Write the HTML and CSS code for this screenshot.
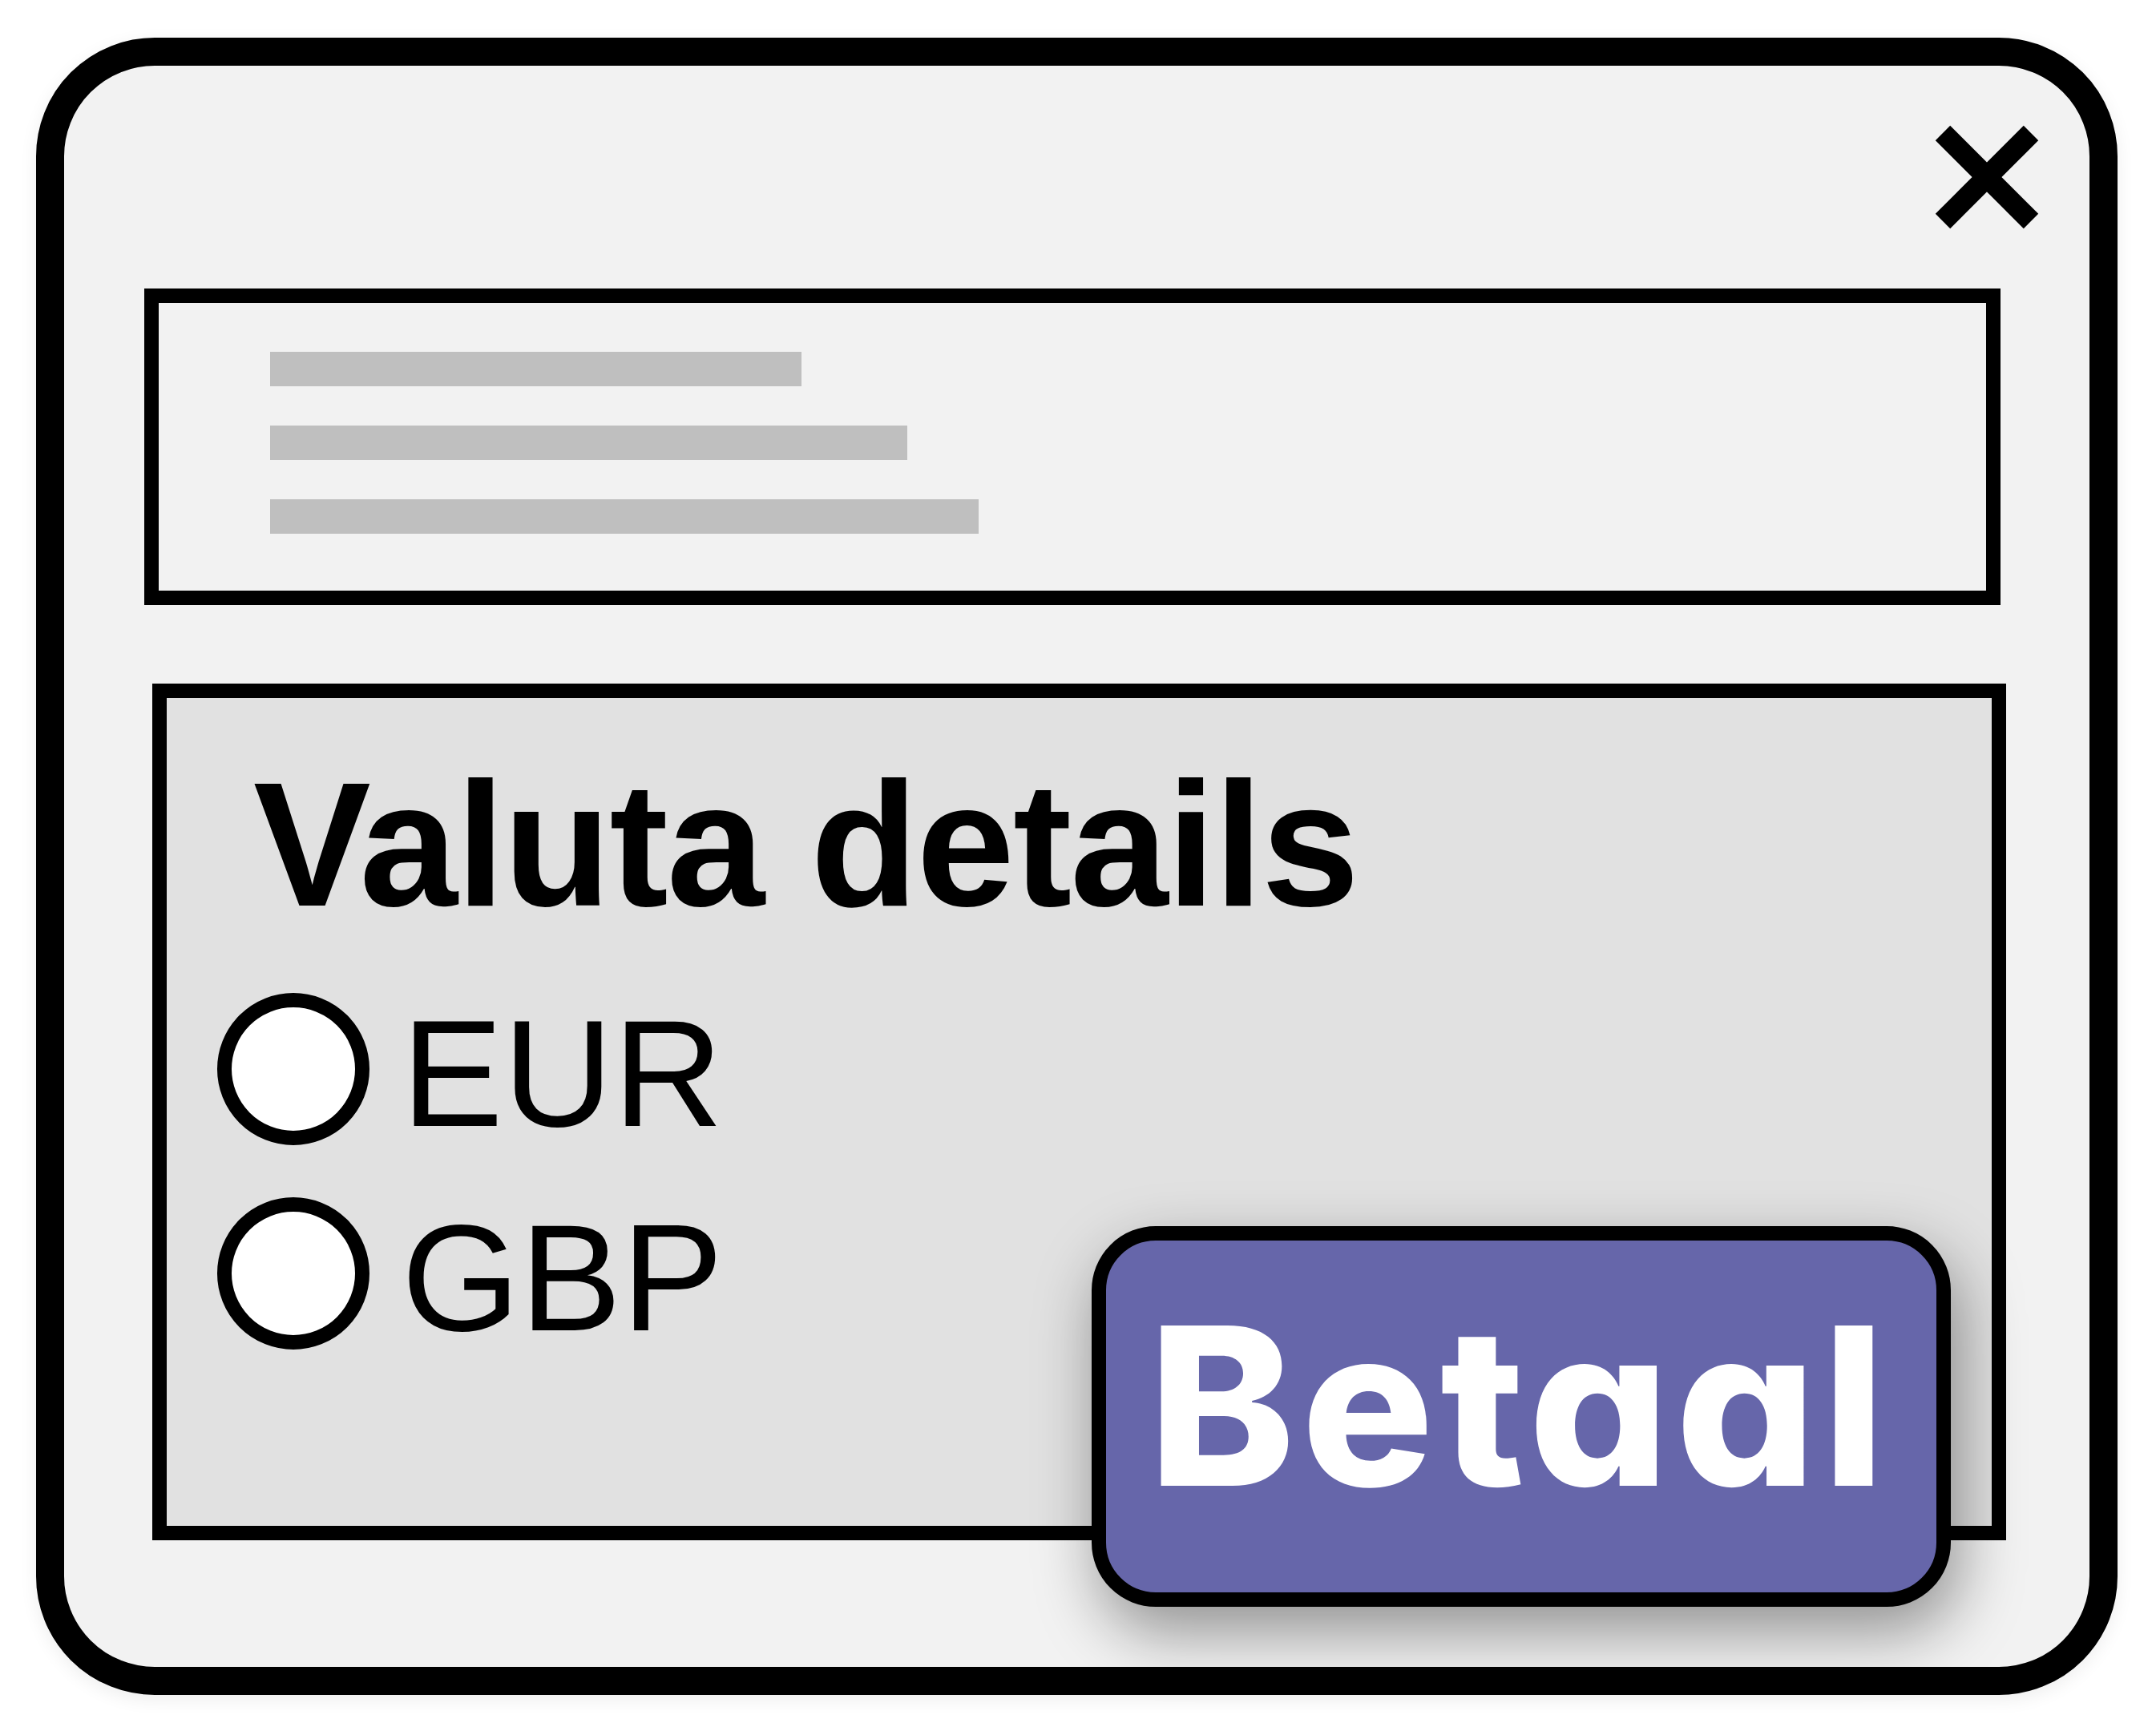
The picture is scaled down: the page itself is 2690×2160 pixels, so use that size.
FILE: index.html
```html
<!DOCTYPE html>
<html lang="nl">
<head>
<meta charset="utf-8">
<title>Valuta details</title>
<link rel="stylesheet" href="styles.css">
</head>
<body>
<div class="dialog">
  <div class="close-row">
    <svg class="close-icon" width="128" height="128" viewBox="0 0 128 128" aria-label="Sluiten">
      <line x1="9" y1="9" x2="119" y2="119" />
      <line x1="119" y1="9" x2="9" y2="119" />
    </svg>
  </div>
  <div class="summary">
    <div class="bar bar-1"></div>
    <div class="bar bar-2"></div>
    <div class="bar bar-3"></div>
  </div>
  <div class="currency">
    <h1 class="currency-title">Valuta details</h1>
    <div class="options">
      <label class="option"><span class="radio"></span><span class="option-label">EUR</span></label>
      <label class="option"><span class="radio"></span><span class="option-label">GBP</span></label>
    </div>
  </div>
  <button class="pay-button">Betaal</button>
</div>
</body>
</html>
```
FILE: styles.css
```css
html, body {
  margin: 0;
  padding: 0;
  background: #ffffff;
}

body {
  width: 2690px;
  height: 2160px;
  overflow: hidden;
  font-family: "Liberation Sans", Arial, sans-serif;
}

.dialog {
  position: relative;
  box-sizing: border-box;
  margin: 47px 0 0 45px;
  width: 2597px;
  height: 2068px;
  border: 35px solid #000;
  border-radius: 148px;
  background: #f2f2f2;
  box-shadow: 0 6px 22px rgba(0, 0, 0, 0.07);
}

.close-row {
  display: flex;
  justify-content: flex-end;
  padding: 75px 64px 0 0;
}

.close-icon {
  overflow: visible;
}

.close-icon line {
  stroke: #000;
  stroke-width: 26px;
  stroke-linecap: butt;
}

.summary {
  display: flex;
  flex-direction: column;
  gap: 49px;
  margin: 75px 111px 0 100px;
  padding: 61px 0 71px 139px;
  border: 18px solid #000;
  background: #f2f2f2;
}

.bar {
  height: 43px;
  background: #bfbfbf;
}

.bar-1 { width: 663px; }
.bar-2 { width: 795px; }
.bar-3 { width: 884px; }

.currency {
  box-sizing: border-box;
  height: 1069px;
  margin: 98px 104px 0 110px;
  padding: 73px 0 0 63px;
  border: 18px solid #000;
  background: #e1e1e1;
}

.currency-title {
  margin: 0 0 75px 45px;
  font-family: "Liberation Sans", Arial, sans-serif;
  font-weight: 700;
  font-size: 220px;
  line-height: 1;
  color: #000;
  letter-spacing: -2px;
}

.options {
  display: flex;
  flex-direction: column;
  gap: 60px;
}

.option {
  display: flex;
  align-items: flex-start;
  gap: 40px;
}

.radio {
  box-sizing: border-box;
  width: 190px;
  height: 190px;
  border: 18px solid #000;
  border-radius: 50%;
  background: #ffffff;
  flex: none;
}

.option-label {
  margin-top: 5px;
  font-family: "Liberation Sans", Arial, sans-serif;
  font-size: 190px;
  line-height: 1;
  color: #000;
}

.pay-button {
  position: absolute;
  left: 1282px;
  top: 1448px;
  box-sizing: border-box;
  width: 1072px;
  height: 475px;
  margin: 0;
  padding: 69px 0 0 53px;
  display: flex;
  align-items: flex-start;
  justify-content: flex-start;
  border: 18px solid #000;
  border-radius: 80px;
  background: #6666aa;
  color: #ffffff;
  font-family: Inter, "Noto Sans", sans-serif;
  font-feature-settings: "cv11" 1;
  font-weight: 800;
  font-size: 275px;
  line-height: 1;
  letter-spacing: 8px;
  box-shadow: 10px 32px 80px rgba(0, 0, 0, 0.4);
  cursor: pointer;
}
```
